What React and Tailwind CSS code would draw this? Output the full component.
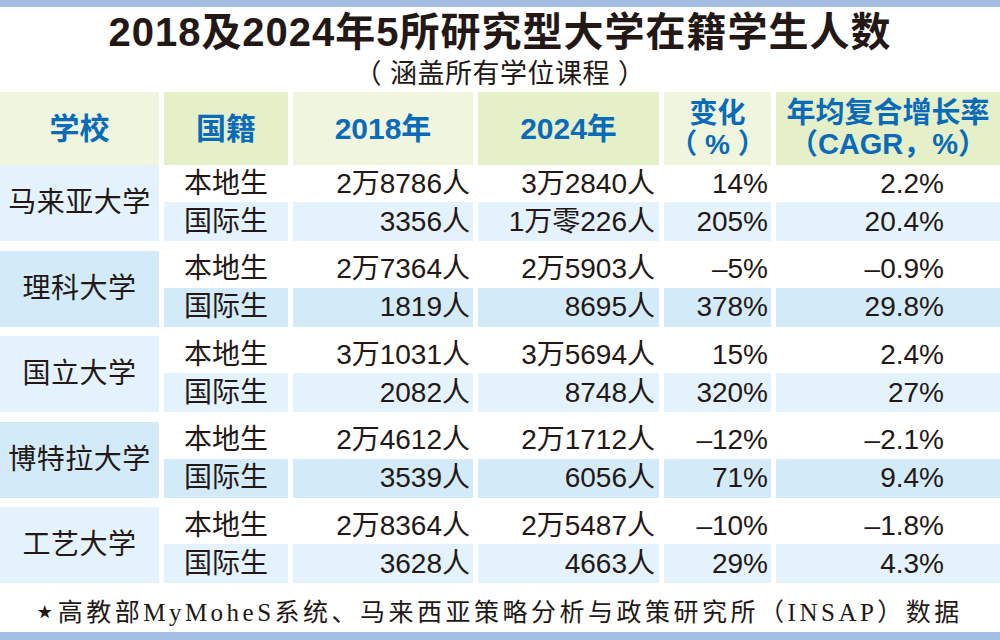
const sans = { fontFamily: '"Liberation Sans", "Noto Sans CJK SC", sans-serif' };

const groups = [
  {
    name: "马来亚大学",
    tone: "bg-[#e3f2fc]",
    rows: [
      ["本地生", "2万8786人", "3万2840人", "14%", "2.2%"],
      ["国际生", "3356人", "1万零226人", "205%", "20.4%"],
    ],
  },
  {
    name: "理科大学",
    tone: "bg-[#d3eaf8]",
    rows: [
      ["本地生", "2万7364人", "2万5903人", "–5%", "–0.9%"],
      ["国际生", "1819人", "8695人", "378%", "29.8%"],
    ],
  },
  {
    name: "国立大学",
    tone: "bg-[#e3f2fc]",
    rows: [
      ["本地生", "3万1031人", "3万5694人", "15%", "2.4%"],
      ["国际生", "2082人", "8748人", "320%", "27%"],
    ],
  },
  {
    name: "博特拉大学",
    tone: "bg-[#d3eaf8]",
    rows: [
      ["本地生", "2万4612人", "2万1712人", "–12%", "–2.1%"],
      ["国际生", "3539人", "6056人", "71%", "9.4%"],
    ],
  },
  {
    name: "工艺大学",
    tone: "bg-[#e3f2fc]",
    rows: [
      ["本地生", "2万8364人", "2万5487人", "–10%", "–1.8%"],
      ["国际生", "3628人", "4663人", "29%", "4.3%"],
    ],
  },
];

const cols = "grid grid-cols-[159px_124px_180px_181px_107px_1fr] gap-x-[5px]";

function Group({ g }) {
  return (
    <div className={`${cols} grid-rows-[37px_39px] text-[28px] text-[#231815]`}>
      <div className={`row-span-2 ${g.tone} flex items-center justify-center tracking-[0.5px]`}>
        {g.name}
      </div>
      {g.rows.map((r, i) => {
        const bg = i === 1 ? g.tone : "";
        return [
          <div key={`a${i}`} className={`${bg} flex items-center justify-center`}>{r[0]}</div>,
          <div key={`b${i}`} className={`${bg} flex items-center justify-end pr-[3px]`}>{r[1]}</div>,
          <div key={`c${i}`} className={`${bg} flex items-center justify-end pr-[4px]`}>{r[2]}</div>,
          <div key={`d${i}`} className={`${bg} flex items-center justify-end pr-[3px]`}>{r[3]}</div>,
          <div key={`e${i}`} className={`${bg} flex items-center justify-end pr-[56px]`}>{r[4]}</div>,
        ];
      })}
    </div>
  );
}

export default function App() {
  return (
    <div className="w-[1000px] h-[640px] bg-white flex flex-col leading-none" style={sans}>
      <div className="h-[7px] bg-[#a3bde3]" />
      <div className="h-[50px] flex items-center justify-center text-[40px] font-bold tracking-[1px] text-[#231815]">
        2018及2024年5所研究型大学在籍学生人数
      </div>
      <div className="h-[35px] flex items-center justify-center text-[27px] tracking-[0.5px] text-[#231815]">
        （ 涵盖所有学位课程 ）
      </div>

      <div className={`${cols} h-[73px] font-bold text-[#0a6bb8]`}>
        <div className="bg-[#f0f6dd] flex items-center justify-center text-[30px]">学校</div>
        <div className="bg-[#e6f0c8] flex items-center justify-center text-[30px]">国籍</div>
        <div className="bg-[#f0f6dd] flex items-center justify-center text-[30px]">2018年</div>
        <div className="bg-[#e6f0c8] flex items-center justify-center text-[30px]">2024年</div>
        <div className="bg-[#f0f6dd] flex flex-col items-center justify-center text-[28px] leading-[31px]">
          <span>变化</span>
          <span>（ % ）</span>
        </div>
        <div className="bg-[#e6f0c8] flex flex-col items-center justify-center text-[29px] leading-[31px]">
          <span>年均复合增长率</span>
          <span>（CAGR，%）</span>
        </div>
      </div>

      <div className="flex flex-col gap-[9.5px]">
        {groups.map((g) => (
          <Group key={g.name} g={g} />
        ))}
      </div>

      <div
        className="flex-1 flex items-center justify-center pt-[10px] text-[25px] tracking-[3.5px] text-[#231815]"
        style={{ fontFamily: '"Liberation Serif", "Noto Sans CJK SC", serif' }}
      >
        <span className="text-[15px] mr-[2px]">★</span>
        高教部MyMoheS系统、马来西亚策略分析与政策研究所（INSAP）数据
      </div>
      <div className="h-[8px] bg-[#a3bde3]" />
    </div>
  );
}
